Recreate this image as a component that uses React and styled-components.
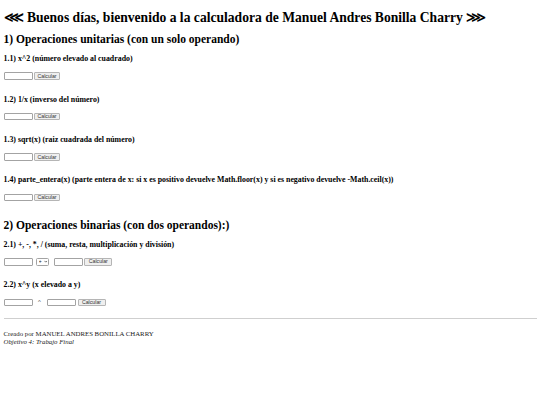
import React from 'react';
import styled, { createGlobalStyle } from 'styled-components';

const GlobalStyle = createGlobalStyle`
    body{
        margin:0;
        background:#ffffff;
        color:#000000;
        font-family: "Liberation Serif", "Times New Roman", serif;
        font-size:7px;
    }
`;

const Page = styled.div`
    display:flow-root;
    padding:0 3.5px;
`;

const Title = styled.h1`
    margin:10.36px 0 0;
    font-size:13.6px;
    line-height:15.5px;
    font-weight:bold;
    white-space:nowrap;
`;

const GroupTitle = styled.h2`
    margin:${p => p.$top}px 0 0;
    font-size:11.5px;
    line-height:13px;
    font-weight:bold;
`;

const OpTitle = styled.h4`
    margin:${p => p.$first ? 7.73 : 14.7}px 0 0;
    font-size:7.85px;
    line-height:9px;
    font-weight:bold;
    white-space:nowrap;
`;

const Row = styled.div`
    display:flex;
    align-items:center;
    height:7.5px;
    margin-top:9.3px;
`;

const NumberInput = styled.input`
    box-sizing:border-box;
    width:29px;
    height:7.5px;
    padding:0 1px;
    margin:0 ${p => p.$gap ?? 1.3}px 0 0;
    border:1px solid #a3a3a3;
    border-radius:1px;
    background:#ffffff;
    font-size:5.5px;
    outline:none;
`;

const Button = styled.button`
    box-sizing:border-box;
    width:${p => p.$wide ? 28 : 26.5}px;
    height:7.5px;
    padding:0;
    margin:0;
    border:1px solid #b5b5b5;
    border-radius:1px;
    background:#efefef;
    color:#333333;
    font-family: "Liberation Sans", Arial, sans-serif;
    font-size:5.2px;
    line-height:5px;
`;

const SelectBox = styled.label`
    box-sizing:border-box;
    display:inline-flex;
    align-items:center;
    gap:1px;
    width:13px;
    height:7.5px;
    margin:0 5px 0 3.5px;
    padding:0 1px 0 1.5px;
    border:1px solid #a3a3a3;
    border-radius:1.5px;
    background:#ffffff;

    select{
        appearance:none;
        -webkit-appearance:none;
        border:0;
        padding:0;
        margin:0;
        width:4px;
        background:transparent;
        font-family: "Liberation Sans", Arial, sans-serif;
        font-size:5.5px;
        line-height:5px;
        color:#222222;
        outline:none;
    }
`;

const Caret = styled.span`
    width:14px;
    text-align:center;
    font-family: "Liberation Sans", Arial, sans-serif;
    font-size:6px;
    color:#555555;
    line-height:6px;
`;

const Rule = styled.hr`
    margin:12.3px 0 0;
    height:0;
    border:0;
    border-top:1px solid #cfcfcf;
`;

const Footer = styled.footer`
    margin-top:10.7px;
    font-size:6.8px;
    line-height:7.6px;
    color:#1a1a1a;

    em{
        display:block;
    }
`;

function Unary({label, first})
{
    return <>
        <OpTitle $first={first}>{label}</OpTitle>
        <Row>
            <NumberInput type="number" />
            <Button>Calcular</Button>
        </Row>
    </>
}

export default function App()
{
    return <>
        <GlobalStyle />
        <Page>
            <Title>⋘ Buenos días, bienvenido a la calculadora de Manuel Andres Bonilla Charry ⋙</Title>

            <GroupTitle $top={7.46}>1) Operaciones unitarias (con un solo operando)</GroupTitle>
            <Unary first label="1.1) x^2 (número elevado al cuadrado)" />
            <Unary label="1.2) 1/x (inverso del número)" />
            <Unary label="1.3) sqrt(x) (raiz cuadrada del número)" />
            <Unary label="1.4) parte_entera(x) (parte entera de x: si x es positivo devuelve Math.floor(x) y si es negativo devuelve -Math.ceil(x))" />

            <GroupTitle $top={17.87}>2) Operaciones binarias (con dos operandos):)</GroupTitle>
            <OpTitle $first>2.1) +, -, *, / (suma, resta, multiplicación y división)</OpTitle>
            <Row>
                <NumberInput type="number" $gap={0} />
                <SelectBox>
                    <select defaultValue="+">
                        <option>+</option>
                        <option>-</option>
                        <option>*</option>
                        <option>/</option>
                    </select>
                    <svg width="4" height="3" viewBox="0 0 8 6">
                        <path d="M1 1.5 L4 4.5 L7 1.5" fill="none" stroke="#333" strokeWidth="1.6" />
                    </svg>
                </SelectBox>
                <NumberInput type="number" />
                <Button $wide>Calcular</Button>
            </Row>

            <OpTitle>2.2) x^y (x elevado a y)</OpTitle>
            <Row>
                <NumberInput type="number" $gap={0} />
                <Caret>^</Caret>
                <NumberInput type="number" $gap={2} />
                <Button $wide>Calcular</Button>
            </Row>

            <Rule />
            <Footer>
                Creado por MANUEL ANDRES BONILLA CHARRY
                <em>Objetivo 4: Trabajo Final</em>
            </Footer>
        </Page>
    </>
}
